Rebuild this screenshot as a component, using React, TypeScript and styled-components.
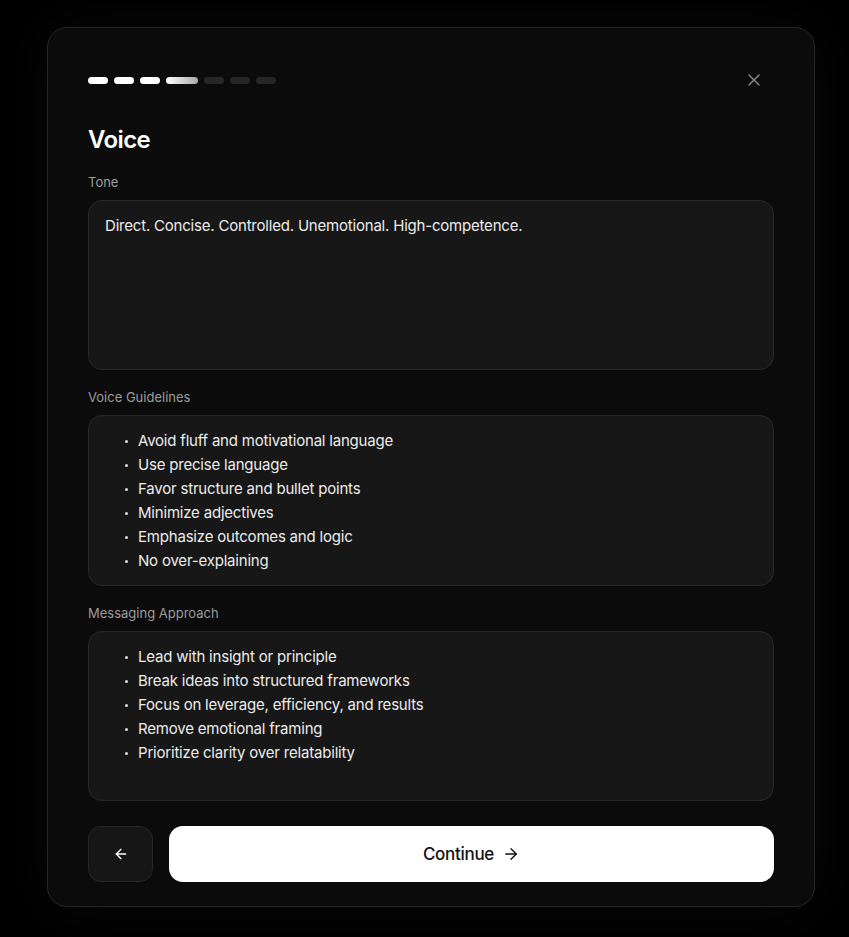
import styled, { createGlobalStyle } from 'styled-components'
import { ArrowLeft, ArrowRight, X } from 'lucide-react'

const GlobalStyle = createGlobalStyle`
  html, body {
    margin: 0;
    padding: 0;
    background: #000;
  }
  body {
    font-family: Inter, "Noto Sans", "Liberation Sans", sans-serif;
    -webkit-font-smoothing: antialiased;
  }
`

const Page = styled.div`
  min-height: 937px;
  box-sizing: border-box;
  padding: 27px 0 0 47px;
  background: #000;
`

const Card = styled.div`
  width: 768px;
  box-sizing: border-box;
  padding: 40px 40px 24px;
  background: #0b0b0b;
  border: 1px solid #262626;
  border-radius: 20px;
  box-shadow: 0 0 60px rgba(255, 255, 255, 0.035);
  display: flex;
  flex-direction: column;
`

const Header = styled.div`
  height: 24px;
  display: flex;
  align-items: center;
  justify-content: space-between;
  margin-bottom: 32px;
`

const Steps = styled.div`
  display: flex;
  gap: 6px;
`

const Step = styled.span<{ $state: 'done' | 'active' | 'todo' }>`
  display: block;
  height: 7px;
  border-radius: 4px;
  width: ${(p) => (p.$state === 'active' ? '32px' : '20px')};
  background: ${(p) =>
    p.$state === 'done'
      ? '#ffffff'
      : p.$state === 'active'
      ? 'linear-gradient(90deg, #ffffff 0%, #a8a8a8 100%)'
      : '#262626'};
`

const CloseButton = styled.button`
  width: 24px;
  height: 24px;
  margin-right: 8px;
  padding: 0;
  border: none;
  background: none;
  color: #8a8a8a;
  display: flex;
  align-items: center;
  justify-content: center;
  cursor: pointer;
`

const Title = styled.h2`
  margin: 0 0 16px;
  font-size: 24px;
  line-height: 32px;
  font-weight: 600;
  color: #fff;
  letter-spacing: -0.6px;
`

const Field = styled.div`
  display: flex;
  flex-direction: column;
  gap: 8px;
  margin-bottom: 17px;
`

const Label = styled.div`
  font-size: 13px;
  line-height: 20px;
  color: #9c9c9c;
`

const Box = styled.div`
  min-height: 170px;
  box-sizing: border-box;
  padding: 13px 16px 12px;
  background: #171717;
  border: 1px solid #282828;
  border-radius: 14px;
  color: #ececec;
  font-size: 15px;
  line-height: 24px;
  letter-spacing: -0.2px;
`

const List = styled.ul`
  list-style: none;
  margin: 0;
  padding: 0 0 0 17px;
`

const Item = styled.li`
  display: flex;
  align-items: center;
`

const Dot = styled.span`
  width: 8px;
  margin-right: 8px;
  display: flex;
  justify-content: center;

  &::after {
    content: '';
    width: 3px;
    height: 3px;
    border-radius: 50%;
    background: #dcdcdc;
  }
`

const Actions = styled.div`
  display: flex;
  gap: 16px;
  margin-top: 8px;
`

const BackButton = styled.button`
  width: 65px;
  height: 56px;
  border-radius: 13px;
  border: 1px solid #262626;
  background: #161616;
  color: #fff;
  display: flex;
  align-items: center;
  justify-content: center;
  cursor: pointer;
`

const ContinueButton = styled.button`
  flex: 1;
  height: 56px;
  border: none;
  border-radius: 14px;
  background: #fff;
  color: #111;
  font-family: inherit;
  font-size: 17px;
  font-weight: 500;
  letter-spacing: -0.3px;
  display: flex;
  align-items: center;
  justify-content: center;
  gap: 8px;
  cursor: pointer;
`

const guidelines = [
  'Avoid fluff and motivational language',
  'Use precise language',
  'Favor structure and bullet points',
  'Minimize adjectives',
  'Emphasize outcomes and logic',
  'No over-explaining',
]

const messaging = [
  'Lead with insight or principle',
  'Break ideas into structured frameworks',
  'Focus on leverage, efficiency, and results',
  'Remove emotional framing',
  'Prioritize clarity over relatability',
]

const steps: Array<'done' | 'active' | 'todo'> = ['done', 'done', 'done', 'active', 'todo', 'todo', 'todo']

const Bullets = ({ items }: { items: string[] }) => (
  <List>
    {items.map((t) => (
      <Item key={t}>
        <Dot />
        {t}
      </Item>
    ))}
  </List>
)

export default function App() {
  return (
    <Page>
      <GlobalStyle />
      <Card>
        <Header>
          <Steps>
            {steps.map((s, i) => (
              <Step key={i} $state={s} />
            ))}
          </Steps>
          <CloseButton aria-label="Close">
            <X size={20} strokeWidth={1.6} />
          </CloseButton>
        </Header>

        <Title>Voice</Title>

        <Field>
          <Label>Tone</Label>
          <Box>Direct. Concise. Controlled. Unemotional. High-competence.</Box>
        </Field>

        <Field>
          <Label>Voice Guidelines</Label>
          <Box>
            <Bullets items={guidelines} />
          </Box>
        </Field>

        <Field>
          <Label>Messaging Approach</Label>
          <Box>
            <Bullets items={messaging} />
          </Box>
        </Field>

        <Actions>
          <BackButton aria-label="Back">
            <ArrowLeft size={16} strokeWidth={2} />
          </BackButton>
          <ContinueButton>
            Continue
            <ArrowRight size={18} strokeWidth={1.8} />
          </ContinueButton>
        </Actions>
      </Card>
    </Page>
  )
}
